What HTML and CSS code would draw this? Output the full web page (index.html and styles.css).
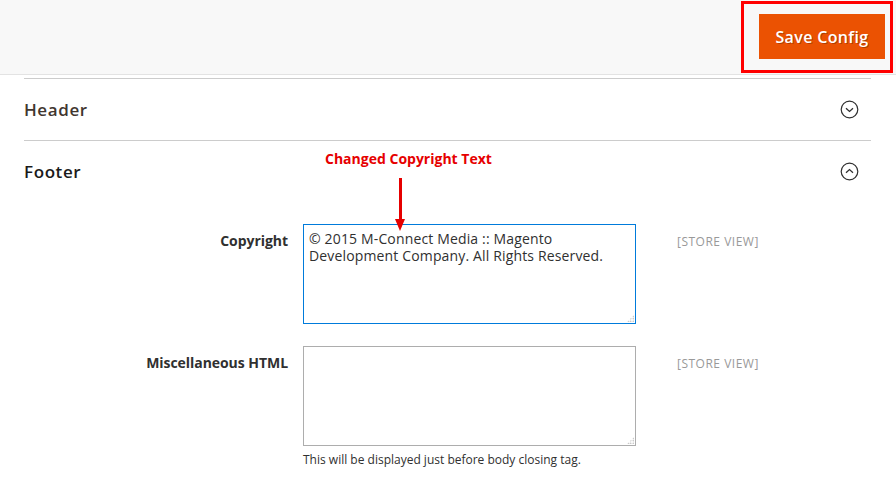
FILE: index.html
```html
<!DOCTYPE html>
<html>
<head>
<meta charset="utf-8">
<link rel="stylesheet" href="styles.css">
</head>
<body>
<div class="page">
  <div class="actions-bar">
    <button class="btn-primary">Save Config</button>
    <div class="highlight-box"></div>
  </div>

  <div class="sections">
    <div class="section">
      <div class="section-head">
        <span class="section-title">Header</span>
        <svg class="toggle" width="19" height="19" viewBox="0 0 19 19"><circle cx="9.5" cy="9.5" r="8.3" fill="none" stroke="#303030" stroke-width="1.2"/><path d="M6 8.2 L9.5 11.4 L13 8.2" fill="none" stroke="#303030" stroke-width="1.3"/></svg>
      </div>
    </div>
    <div class="section section-open">
      <div class="section-head">
        <span class="section-title dark">Footer</span>
        <svg class="toggle" width="19" height="19" viewBox="0 0 19 19"><circle cx="9.5" cy="9.5" r="8.3" fill="none" stroke="#303030" stroke-width="1.2"/><path d="M6 10.8 L9.5 7.6 L13 10.8" fill="none" stroke="#303030" stroke-width="1.3"/></svg>
      </div>
      <div class="fields">
        <div class="field-row">
          <label class="field-label">Copyright</label>
          <div class="field-control">
            <div class="textarea focused">© 2015 M-Connect Media :: Magento Development Company. All Rights Reserved.<span class="grip"></span></div>
          </div>
          <div class="field-scope">[STORE VIEW]</div>
        </div>
        <div class="field-row">
          <label class="field-label">Miscellaneous HTML</label>
          <div class="field-control">
            <div class="textarea"><span class="grip"></span></div>
            <div class="note">This will be displayed just before body closing tag.</div>
          </div>
          <div class="field-scope">[STORE VIEW]</div>
        </div>
      </div>
    </div>
  </div>

  <div class="annotation">
    <div class="annotation-text">Changed Copyright Text</div>
    <div class="arrow-shaft"></div>
    <div class="arrow-head"></div>
  </div>
</div>
</body>
</html>
```

FILE: styles.css
```css
html, body {
  margin: 0;
  padding: 0;
  background: #fff;
}
body {
  font-family: "Open Sans", "Liberation Sans", sans-serif;
  color: #303030;
  width: 896px;
  height: 495px;
  overflow: hidden;
}
.page {
  position: relative;
  width: 896px;
  height: 495px;
}
.actions-bar {
  position: relative;
  height: 75px;
  box-sizing: border-box;
  background: #f8f8f8;
  border-bottom: 1px solid #e3e3e3;
  display: flex;
  justify-content: flex-end;
  align-items: flex-start;
  padding: 14px 11px 0 0;
}
.btn-primary {
  width: 126px;
  height: 45px;
  background: #eb5202;
  border: 1px solid #eb5202;
  color: #fff;
  font-family: "Open Sans", "Liberation Sans", sans-serif;
  font-size: 16px;
  font-weight: 600;
  letter-spacing: 0.35px;
  padding: 0;
  text-shadow: 1px 1px 0 rgba(0,0,0,0.25);
}
.highlight-box {
  position: absolute;
  left: 741px;
  top: 1px;
  width: 146px;
  height: 66px;
  border: 3px solid #f00;
}
.sections {
  margin: 3px 25px 0 24px;
}
.section {
  border-top: 1px solid #cccccc;
}
.section-head {
  height: 61px;
  display: flex;
  align-items: center;
  justify-content: space-between;
  padding-right: 12px;
}
.section-title {
  font-size: 17px;
  font-weight: 600;
  color: #41362f;
  letter-spacing: 0.6px;
}
.section-title.dark {
  color: #1a1a1a;
}
.toggle {
  display: block;
}
.fields {
  padding-top: 22px;
}
.field-row {
  display: flex;
  align-items: flex-start;
  margin-bottom: 22px;
}
.field-label {
  width: 264px;
  text-align: right;
  font-size: 14px;
  font-weight: 700;
  color: #303030;
  padding-top: 8px;
  line-height: 18px;
  box-sizing: border-box;
  letter-spacing: -0.05px;
}
.field-control {
  margin-left: 15px;
  width: 333px;
}
.textarea {
  position: relative;
  box-sizing: border-box;
  width: 333px;
  height: 100px;
  border: 1px solid #adadad;
  padding: 5px 5px;
  font-size: 14px;
  line-height: 17px;
  color: #303030;
  letter-spacing: 0.15px;
}
.textarea.focused {
  border-color: #007bdb;
}
.grip {
  position: absolute;
  right: 1px;
  bottom: 1px;
  width: 7px;
  height: 7px;
  background:
    radial-gradient(circle, #aaa 0.7px, transparent 0.9px) 0 0 / 2.5px 2.5px;
  clip-path: polygon(100% 0, 100% 100%, 0 100%);
}
.note {
  margin-top: 5px;
  font-size: 12px;
  line-height: 18px;
  color: #303030;
}
.field-scope {
  margin-left: 41px;
  padding-top: 10px;
  font-size: 12px;
  line-height: 16px;
  color: #999;
  letter-spacing: 0.5px;
}
.annotation {
  position: absolute;
  left: 325px;
  top: 149px;
  width: 200px;
  height: 90px;
}
.annotation-text {
  color: #e60000;
  font-size: 14px;
  font-weight: 700;
  line-height: 20px;
  white-space: nowrap;
}
.arrow-shaft {
  position: absolute;
  left: 74px;
  top: 29px;
  width: 3px;
  height: 44px;
  background: #e60000;
}
.arrow-head {
  position: absolute;
  left: 70px;
  top: 70px;
  width: 0;
  height: 0;
  border-left: 5.5px solid transparent;
  border-right: 5.5px solid transparent;
  border-top: 12px solid #e60000;
}
```
